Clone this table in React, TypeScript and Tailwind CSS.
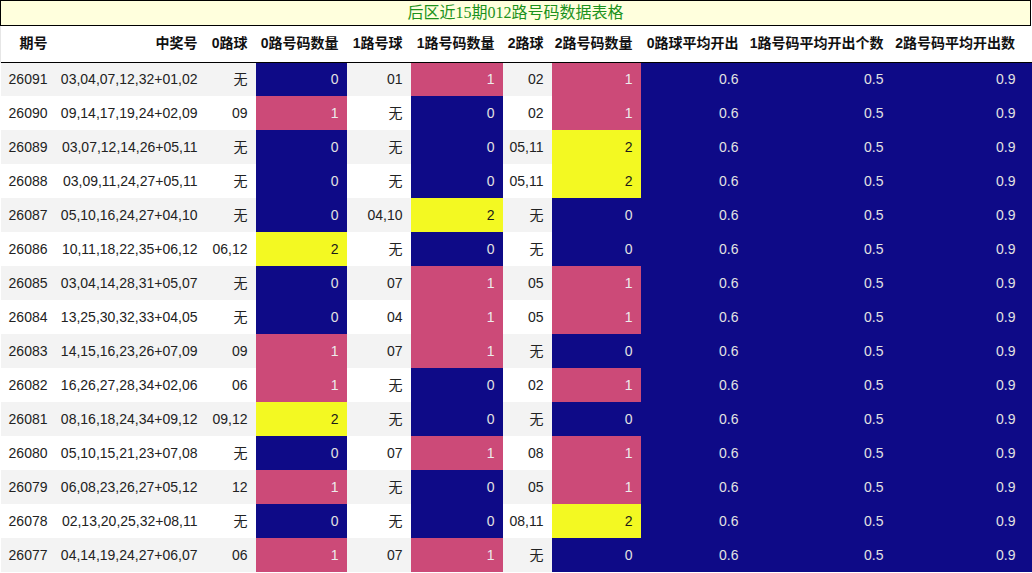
const widths = [55, 150, 50, 91, 64, 92, 49, 89, 106, 145, 141];

const headers = [
  "期号",
  "中奖号",
  "0路球",
  "0路号码数量",
  "1路号球",
  "1路号码数量",
  "2路球",
  "2路号码数量",
  "0路球平均开出",
  "1路号码平均开出个数",
  "2路号码平均开出数",
];

type Row = [string, string, string, number, string, number, string, number];

const rows: Row[] = [
  ["26091", "03,04,07,12,32+01,02", "无", 0, "01", 1, "02", 1],
  ["26090", "09,14,17,19,24+02,09", "09", 1, "无", 0, "02", 1],
  ["26089", "03,07,12,14,26+05,11", "无", 0, "无", 0, "05,11", 2],
  ["26088", "03,09,11,24,27+05,11", "无", 0, "无", 0, "05,11", 2],
  ["26087", "05,10,16,24,27+04,10", "无", 0, "04,10", 2, "无", 0],
  ["26086", "10,11,18,22,35+06,12", "06,12", 2, "无", 0, "无", 0],
  ["26085", "03,04,14,28,31+05,07", "无", 0, "07", 1, "05", 1],
  ["26084", "13,25,30,32,33+04,05", "无", 0, "04", 1, "05", 1],
  ["26083", "14,15,16,23,26+07,09", "09", 1, "07", 1, "无", 0],
  ["26082", "16,26,27,28,34+02,06", "06", 1, "无", 0, "02", 1],
  ["26081", "08,16,18,24,34+09,12", "09,12", 2, "无", 0, "无", 0],
  ["26080", "05,10,15,21,23+07,08", "无", 0, "07", 1, "08", 1],
  ["26079", "06,08,23,26,27+05,12", "12", 1, "无", 0, "05", 1],
  ["26078", "02,13,20,25,32+08,11", "无", 0, "无", 0, "08,11", 2],
  ["26077", "04,14,19,24,27+06,07", "06", 1, "07", 1, "无", 0],
];

// 0 -> navy, 1 -> pink, 2 -> yellow
const countCell = (n: number) => {
  if (n === 2) return "bg-[#f3f922] text-[#1a1a1a]";
  if (n === 1) return "bg-[#cc4a78] text-[#ececec]";
  return "bg-[#0e0a87] text-[#e2e2e2]";
};

export default function App() {
  return (
    <div className="w-[1032px] h-[573px] overflow-hidden bg-white font-['Liberation_Sans','Noto_Sans_CJK_SC',sans-serif]">
      <div className="w-[1031px] h-[26px] border border-black bg-[#ffffdd] flex items-center justify-center text-[16px] leading-none text-[#1c921c] font-['Liberation_Serif','Noto_Sans_CJK_SC',serif]">
        后区近15期012路号码数据表格
      </div>
      <table className="table-fixed border-collapse w-[1032px] text-[14px]">
        <colgroup>
          {widths.map((w, i) => (
            <col key={i} style={{ width: w }} />
          ))}
        </colgroup>
        <thead>
          <tr className="h-[36px] border-b border-black">
            {headers.map((h, i) => (
              <th
                key={h}
                className={
                  "text-right font-bold text-[#111] whitespace-nowrap pl-0 " +
                  (i === headers.length - 1 ? "pr-[17px] border-r border-[#e6e6e6]" : "pr-2") +
                  (i === 0 ? " border-l border-[#e6e6e6]" : "")
                }
              >
                {h}
              </th>
            ))}
          </tr>
        </thead>
        <tbody>
          {rows.map((r, idx) => (
            <tr key={r[0]} className={"h-[34px] " + (idx % 2 === 0 ? "bg-[#f3f3f3]" : "bg-white")}>
              <td className="text-right pr-2 text-[#222]">{r[0]}</td>
              <td className="text-right pr-2 text-[#222] whitespace-nowrap">{r[1]}</td>
              <td className="text-right pr-2 text-[#222]">{r[2]}</td>
              <td className={"text-right pr-2 " + countCell(r[3])}>{r[3]}</td>
              <td className="text-right pr-2 text-[#222]">{r[4]}</td>
              <td className={"text-right pr-2 " + countCell(r[5])}>{r[5]}</td>
              <td className="text-right pr-2 text-[#222]">{r[6]}</td>
              <td className={"text-right pr-2 " + countCell(r[7])}>{r[7]}</td>
              <td className="text-right pr-2 bg-[#0e0a87] text-[#e2e2e2]">0.6</td>
              <td className="text-right pr-2 bg-[#0e0a87] text-[#e2e2e2]">0.5</td>
              <td className="text-right pr-[17px] bg-[#0e0a87] text-[#e2e2e2]">0.9</td>
            </tr>
          ))}
        </tbody>
      </table>
    </div>
  );
}
